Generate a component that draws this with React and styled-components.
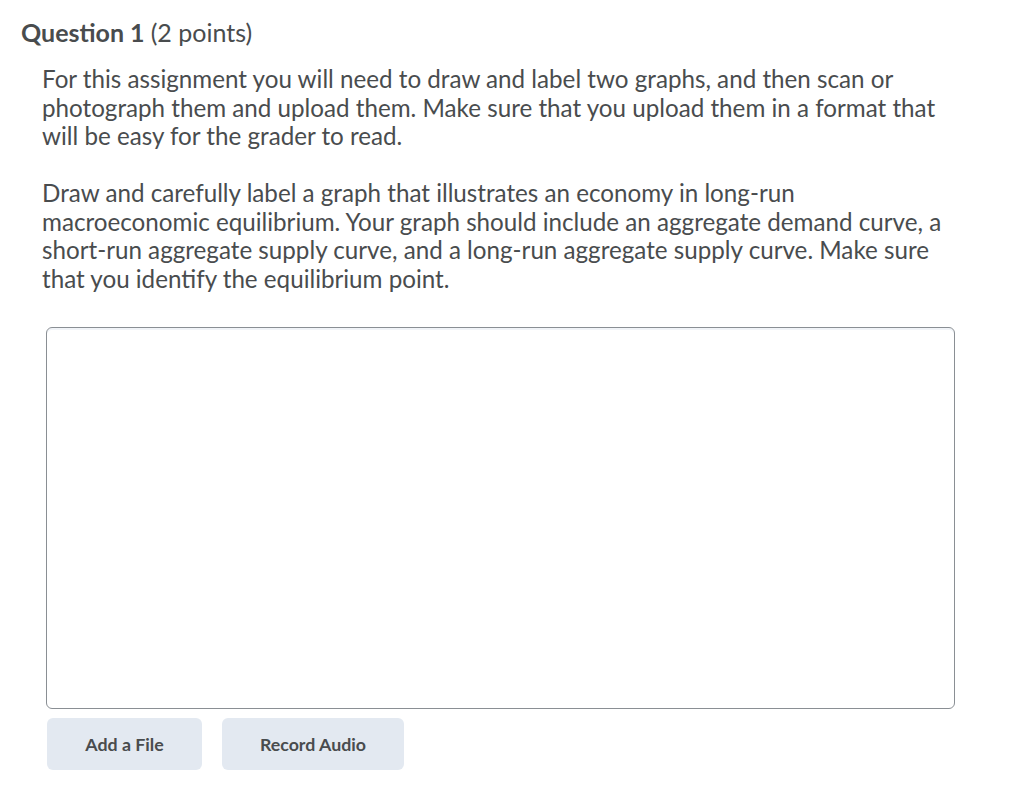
import React from 'react';
import styled, { createGlobalStyle } from 'styled-components';

const GlobalStyle = createGlobalStyle`
  body {
    margin: 0;
    background: #ffffff;
    font-family: Lato, "Open Sans", sans-serif;
    color: #494c4e;
  }
`;

const Page = styled.div`
  padding: 16px 21px 0 21px;
`;

const Heading = styled.h2`
  margin: 0;
  font-size: 25px;
  line-height: 32px;
  font-weight: 700;
  color: #494c4e;

  span {
    font-weight: 400;
  }
`;

const Body = styled.div`
  padding: 0 0 0 21px;
  margin-top: 17px;
`;

const Paragraph = styled.p`
  margin: 0 0 28.5px 0;
  font-size: 24.2px;
  line-height: 28.5px;
  white-space: nowrap;
`;

const Answer = styled.div`
  margin: 34px 0 0 4px;
  width: 909px;
  height: 382px;
  box-sizing: border-box;
  border: 1px solid #8a8f94;
  border-radius: 6px;
  box-shadow: inset 0 2px 0 0 #f1f4f8;
  background: #fff;
`;

const Actions = styled.div`
  display: flex;
  gap: 20px;
  margin: 9px 0 0 5px;
`;

const Button = styled.button`
  height: 52px;
  width: ${(p) => p.w}px;
  border: none;
  border-radius: 6px;
  background: #e3e9f1;
  color: #494c4e;
  font-family: Lato, "Open Sans", sans-serif;
  font-weight: 700;
  font-size: 17.8px;
  cursor: pointer;
`;

export default () => {
  return (
    <>
      <GlobalStyle />
      <Page>
        <Heading>
          Question 1 <span>(2 points)</span>
        </Heading>
        <Body>
          <Paragraph>
            For this assignment you will need to draw and label two graphs, and then scan or
            <br />
            photograph them and upload them. Make sure that you upload them in a format that
            <br />
            will be easy for the grader to read.
          </Paragraph>
          <Paragraph>
            Draw and carefully label a graph that illustrates an economy in long-run
            <br />
            macroeconomic equilibrium. Your graph should include an aggregate demand curve, a
            <br />
            short-run aggregate supply curve, and a long-run aggregate supply curve. Make sure
            <br />
            that you identify the equilibrium point.
          </Paragraph>
          <Answer />
          <Actions>
            <Button w={155}>Add a File</Button>
            <Button w={182}>Record Audio</Button>
          </Actions>
        </Body>
      </Page>
    </>
  );
};
